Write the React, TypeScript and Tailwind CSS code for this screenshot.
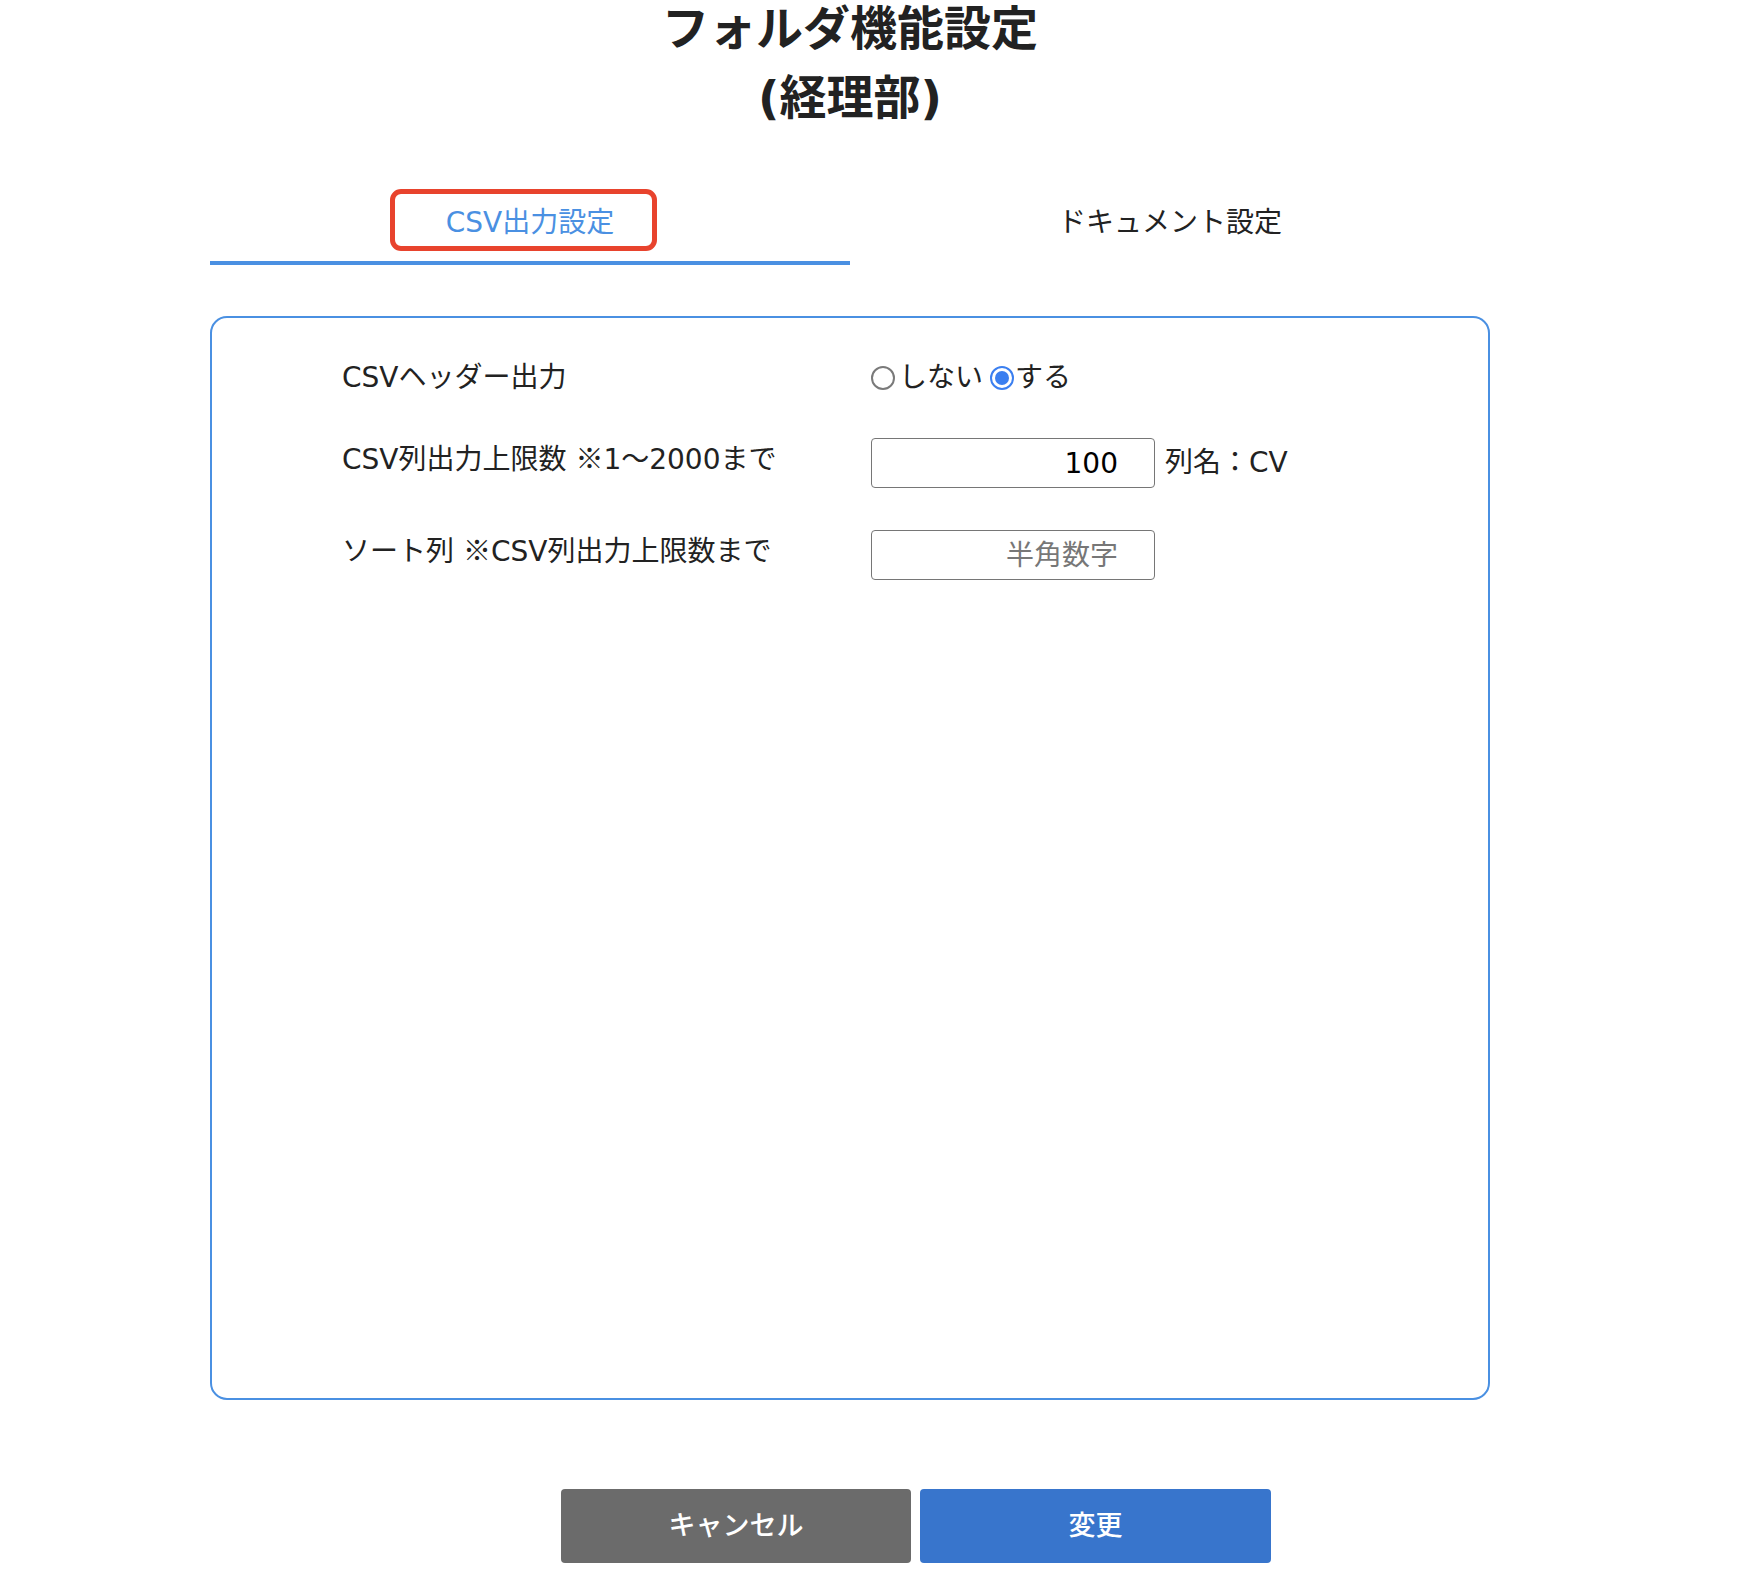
import { useState } from 'react';

function Radio({ checked }: { checked: boolean }) {
  return checked ? (
    <span className="flex h-[24px] w-[24px] items-center justify-center rounded-full border-2 border-[#3b7ff0] bg-white">
      <span className="h-[14px] w-[14px] rounded-full bg-[#3b7ff0]" />
    </span>
  ) : (
    <span className="h-[24px] w-[24px] rounded-full border-2 border-[#7a7a7a] bg-white" />
  );
}

// ※ is kept in the CJK face so it keeps its full width
const Kome = () => <span className="font-['Noto_Sans_CJK_JP',sans-serif]">※</span>;

export default function App() {
  const [tab, setTab] = useState<'csv' | 'doc'>('csv');
  const [header, setHeader] = useState(true);

  return (
    <div className="min-h-[1574px] bg-white font-['DejaVu_Sans','Noto_Sans_CJK_JP',sans-serif] text-[#222]">
      <div className="ml-[210px] w-[1280px]">
        <h1 className="pt-[2px] text-center text-[47px] font-semibold">
          <span className="block leading-[54px]">フォルダ機能設定</span>
          <span className="mt-[14px] block leading-[56px]">(経理部)</span>
        </h1>

        <div className="mt-[63px] flex">
          <button onClick={() => setTab('csv')} className="flex w-[640px] cursor-pointer flex-col">
            <span
              className={`ml-[180px] box-border h-[62px] w-[267px] rounded-[11px] border-[5px] pl-[13px] text-center text-[28px] leading-[58px] ${
                tab === 'csv' ? 'border-[#e8432d] text-[#4a90e2]' : 'border-transparent text-[#222]'
              }`}
            >
              CSV出力設定
            </span>
            <span className={`mt-[10px] h-[4px] w-full ${tab === 'csv' ? 'bg-[#4a90e2]' : 'bg-transparent'}`} />
          </button>
          <button onClick={() => setTab('doc')} className="flex w-[640px] cursor-pointer flex-col items-center">
            <span className={`h-[62px] text-[28px] leading-[68px] ${tab === 'doc' ? 'text-[#4a90e2]' : 'text-[#222]'}`}>
              ドキュメント設定
            </span>
            <span className={`mt-[10px] h-[4px] w-full ${tab === 'doc' ? 'bg-[#4a90e2]' : 'bg-transparent'}`} />
          </button>
        </div>

        <div className="mt-[51px] h-[1084px] rounded-[17px] border-2 border-[#4a90e2] pl-[130px] pt-[45px] text-[28px]">
          <div className="flex h-[30px] items-center">
            <div className="w-[529px]">CSVヘッダー出力</div>
            <label className="flex cursor-pointer items-center" onClick={() => setHeader(false)}>
              <Radio checked={!header} />
              <span className="ml-[4px]">しない</span>
            </label>
            <label className="ml-[7px] flex cursor-pointer items-center" onClick={() => setHeader(true)}>
              <Radio checked={header} />
              <span className="ml-[1px]">する</span>
            </label>
          </div>

          <div className="mt-[45px] flex h-[50px] items-start">
            <div className="w-[529px] leading-[38px]">
              CSV列出力上限数 <Kome />1〜2000まで
            </div>
            <input
              defaultValue="100"
              className="h-[50px] w-[284px] rounded-[4px] border-[1.5px] border-[#767676] pr-[36px] text-right text-[28px] text-black outline-none"
            />
            <span className="ml-[10px] leading-[50px]">列名：CV</span>
          </div>

          <div className="mt-[42px] flex h-[50px] items-start">
            <div className="w-[529px] leading-[38px]">
              ソート列 <Kome />CSV列出力上限数まで
            </div>
            <input
              placeholder="半角数字"
              className="h-[50px] w-[284px] rounded-[4px] border-[1.5px] border-[#767676] pr-[36px] text-right text-[28px] text-black outline-none placeholder:text-[#777]"
            />
          </div>
        </div>

        <div className="ml-[351px] mt-[89px] flex gap-[9px]">
          <button className="h-[74px] w-[350px] cursor-pointer rounded-[4px] bg-[#6b6b6b] text-[27px] font-medium text-white">
            キャンセル
          </button>
          <button className="h-[74px] w-[351px] cursor-pointer rounded-[4px] bg-[#3875cc] text-[27px] font-medium text-white">
            変更
          </button>
        </div>
      </div>
    </div>
  );
}
